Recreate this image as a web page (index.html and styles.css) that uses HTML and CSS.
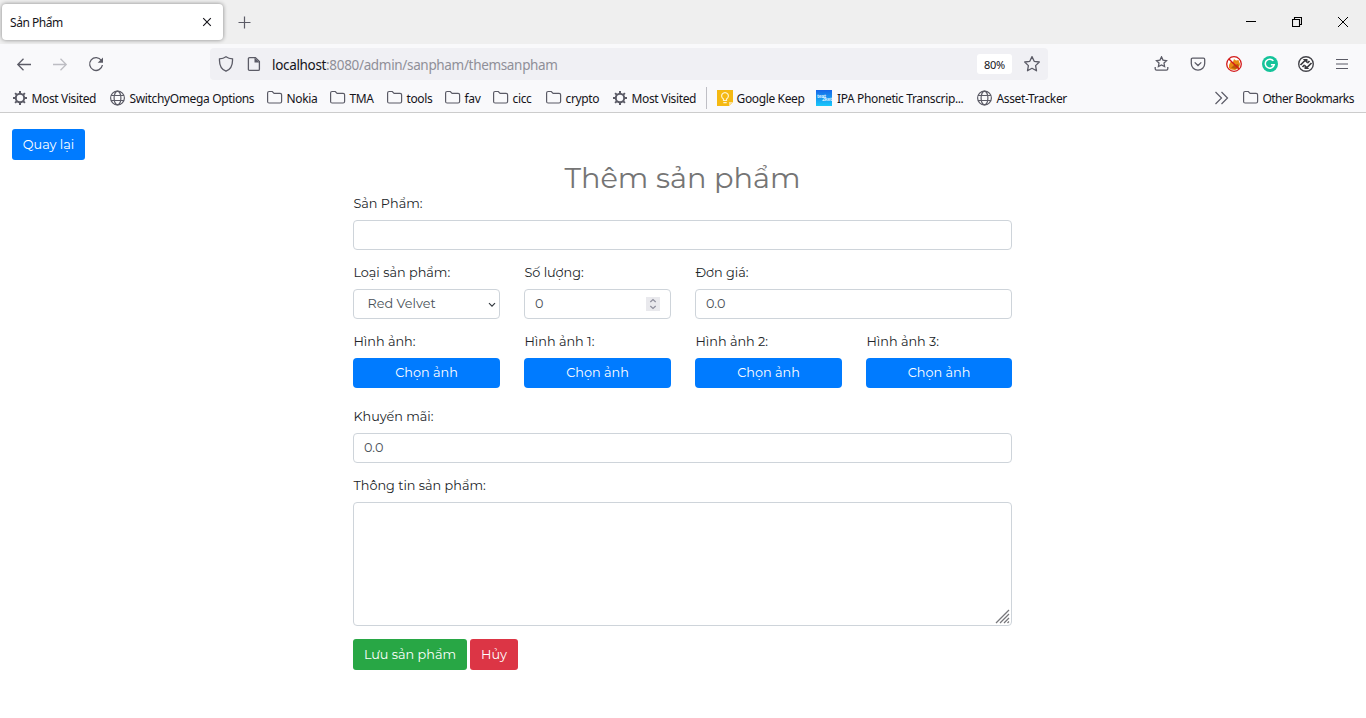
FILE: index.html
```html
<!DOCTYPE html>
<html lang="vi">
<head>
<meta charset="utf-8">
<title>Sản Phẩm</title>
<link rel="stylesheet" href="styles.css">
</head>
<body>
<svg width="0" height="0" class="defs">
  <symbol id="gear" viewBox="0 0 16 16"><circle cx="8" cy="8" r="4.200" fill="none" stroke="currentColor" stroke-width="2"/><path d="M8 1v3M8 12v3M1 8h3M12 8h3M3.1 3.1l2 2M10.9 10.9l2 2M3.1 12.9l2-2M10.9 5.1l2-2" stroke="currentColor" stroke-width="2"/></symbol>
  <symbol id="globe" viewBox="0 0 16 16"><g fill="none" stroke="currentColor" stroke-width="1.2"><circle cx="7.500" cy="8" r="6.9"/><ellipse cx="7.500" cy="8" rx="3.4" ry="6.9"/><path d="M1 5.500h13M1 10.500h13"/></g></symbol>
  <symbol id="folder" viewBox="0 0 16 16"><path d="M.6 3q0-1.500 1.500-1.500h3.200l1.800 1.800h6q1.500 0 1.500 1.500v6.700q0 1.500-1.500 1.500h-11q-1.500 0-1.500-1.500z" fill="none" stroke="currentColor" stroke-width="1.200"/></symbol>
</svg>

<header class="browser">
  <div class="titlebar">
    <div class="tab"><span class="tab-title">Sản Phẩm</span>
      <svg class="tab-close" width="10" height="10" viewBox="0 0 10 10"><path d="M1.200 1.200l7.600 7.600M8.800 1.200l-7.600 7.600" stroke="#15141a" stroke-width="1.100"/></svg>
    </div>
    <svg class="new-tab" width="13" height="13" viewBox="0 0 13 13"><path d="M6.500 .5v12M.5 6.500h12" stroke="#5b5b66" stroke-width="1.200"/></svg>
    <div class="window-buttons">
      <svg width="10" height="10" viewBox="0 0 10 10"><path d="M0 4.500h10" stroke="#000"/></svg>
      <svg width="10" height="10" viewBox="0 0 10 10"><path d="M.5 2.500h7v7h-7zM2.500 2.500v-2h7v7h-2" fill="none" stroke="#000" stroke-width="1.100"/></svg>
      <svg width="10" height="10" viewBox="0 0 10 10"><path d="M0 0l10 10M10 0L0 10" stroke="#000"/></svg>
    </div>
  </div>

  <div class="navbar">
    <div class="nav-buttons">
      <svg width="16" height="16" viewBox="0 0 16 16"><path d="M15 8.500H2M7.500 2.800L1.800 8.500l5.700 5.700" fill="none" stroke="#5b5b66" stroke-width="1.300"/></svg>
      <svg width="16" height="16" viewBox="0 0 16 16"><path d="M1 8.500h13M8.500 2.800l5.700 5.700-5.700 5.700" fill="none" stroke="#bdbdc3" stroke-width="1.300"/></svg>
      <svg width="16" height="16" viewBox="0 0 16 16"><path d="M13.400 4.500A6.400 6.400 0 1 0 14.400 9" fill="none" stroke="#5b5b66" stroke-width="1.300"/><path d="M15 1.500v5.300H9.700z" fill="#5b5b66"/></svg>
    </div>
    <div class="urlbar">
      <svg width="16" height="16" viewBox="0 0 16 16"><path d="M8 .7c2 1.400 4.200 2 6.500 2.200.3 5.500-1 10.100-6.500 12.300C2.500 13 1.200 8.400 1.500 2.900 3.800 2.700 6 2.100 8 .7z" fill="none" stroke="#5b5b66" stroke-width="1.300"/></svg>
      <svg class="page-icon" width="16" height="16" viewBox="0 0 16 16"><path d="M3.600 1.600h5.800l4 4v7.600q0 1.200-1.200 1.200H3.600q-1.200 0-1.200-1.200V2.800q0-1.200 1.200-1.200z" fill="none" stroke="#5b5b66" stroke-width="1.300"/><path d="M8.500 1.500v5h5z" fill="#5b5b66"/></svg>
      <span class="url"><b>localhost</b>:8080/admin/sanpham/themsanpham</span>
      <span class="zoom">80%</span>
      <svg width="18" height="18" viewBox="0 0 18 18"><path d="M9 1.600l2.200 4.700 5.100.7-3.700 3.600.9 5.200L9 13.300l-4.500 2.500.9-5.200L1.700 7l5.100-.7z" fill="none" stroke="#5b5b66" stroke-width="1.300" stroke-linejoin="round"/></svg>
    </div>
    <div class="tools">
      <svg width="16" height="16" viewBox="0 0 16 16"><path d="M7.500 .9l1.500 3.200 3.500.5L10 7l.6 3.500-3.100-1.600-3.100 1.600L5 7 2.500 4.600l3.500-.5zM1.200 11v1.700q0 1.400 1.400 1.400h9.800q1.400 0 1.400-1.400V11" fill="none" stroke="#5b5b66" stroke-width="1.300"/></svg>
      <svg width="16" height="16" viewBox="0 0 16 16"><path d="M2.500 2.200h11q1.200 0 1.200 1.200v4.100a6.700 6.700 0 0 1-13.400 0V3.400q0-1.200 1.200-1.200zM4.700 6.400L8 9.500l3.300-3.100" fill="none" stroke="#5b5b66" stroke-width="1.300"/></svg>
      <svg width="16" height="16" viewBox="0 0 16 16"><circle cx="8" cy="8" r="7.300" fill="#fff"/><path d="M3 9l1.500-3L7 6l1-3 2 1.500L12.500 4l1.500 4-1 4-4 2-4-.5L3 12z" fill="#e88a12"/><path d="M5 12l3-3 4-1 1 2-3 3z" fill="#b85c08"/><circle cx="8" cy="8" r="7.300" fill="none" stroke="#d31919" stroke-width="1.300"/><path d="M2.900 2.900l10.200 10.200" stroke="#d31919" stroke-width="1.400"/></svg>
      <svg width="16" height="16" viewBox="0 0 16 16"><circle cx="8" cy="8" r="8" fill="#15c39a"/><path d="M11.400 4.900A4.500 4.500 0 1 0 12.200 8.700H8.900" fill="none" stroke="#fff" stroke-width="1.500"/></svg>
      <svg width="16" height="16" viewBox="0 0 16 16"><circle cx="8" cy="8" r="7.300" fill="#fff" stroke="#45454b" stroke-width="1.400"/><path d="M2.500 9L7 4.500M4.500 11l2-2M9 11.500l4.500-4.500M9.500 7l2-2" stroke="#38383d" stroke-width="1.700"/><path d="M4.800 3h4.700v4.700zM6.500 13h4.700L6.500 8.300z" fill="#38383d"/></svg>
      <svg width="16" height="16" viewBox="0 0 16 16"><path d="M2 3.500h12M2 8h12M2 12.500h12" stroke="#5b5b66" stroke-width="1.200"/></svg>
    </div>
  </div>

  <nav class="bookmarks">
    <a><svg><use href="#gear"/></svg><span>Most Visited</span></a>
    <a><svg><use href="#globe"/></svg><span>SwitchyOmega Options</span></a>
    <a><svg><use href="#folder"/></svg><span>Nokia</span></a>
    <a><svg><use href="#folder"/></svg><span>TMA</span></a>
    <a><svg><use href="#folder"/></svg><span>tools</span></a>
    <a><svg><use href="#folder"/></svg><span>fav</span></a>
    <a><svg><use href="#folder"/></svg><span>cicc</span></a>
    <a><svg><use href="#folder"/></svg><span>crypto</span></a>
    <a><svg><use href="#gear"/></svg><span>Most Visited</span></a>
    <i class="divider"></i>
    <a><svg viewBox="0 0 16 16"><path d="M0 0h16v12l-4 4H0z" fill="#f5b912"/><path d="M16 12l-4 4v-4z" fill="#fbe19c"/><path d="M6.500 10.500V9a3.400 3.400 0 1 1 3 0v1.500zM6.300 12.600h3.400" fill="none" stroke="#fff3cf" stroke-width="1.200"/></svg><span>Google Keep</span></a>
    <a class="ipa"><svg viewBox="0 0 16 16"><defs><linearGradient id="sky" x2="0" y2="1"><stop stop-color="#1766e8"/><stop offset="1" stop-color="#18c8fa"/></linearGradient></defs><path d="M0 0h16v16H0z" fill="url(#sky)"/><text x="1" y="7.500" class="logo-text">text</text><text x="6" y="11" class="logo-text">2ket</text></svg><span>IPA Phonetic Transcrip...</span></a>
    <a><svg><use href="#globe"/></svg><span>Asset-Tracker</span></a>
    <svg class="more" viewBox="0 0 16 16"><path d="M1.500 2l6 6-6 6M7.500 2l6 6-6 6" fill="none" stroke="#5b5b66" stroke-width="1.200"/></svg>
    <a class="other"><svg><use href="#folder"/></svg><span>Other Bookmarks</span></a>
  </nav>
</header>

<main class="page">
  <button class="btn primary back">Quay lại</button>
  <form class="product-form">
    <h2>Thêm sản phẩm</h2>
    <div class="field"><label>Sản Phẩm:</label><input class="control" type="text"></div>
    <div class="row">
      <div class="field"><label>Loại sản phẩm:</label>
        <div class="control select">Red Velvet<svg width="8" height="6" viewBox="0 0 8 6"><path d="M1 1.200l3 3 3-3" fill="none" stroke="#33393f" stroke-width="1.200"/></svg></div></div>
      <div class="field"><label>Số lượng:</label>
        <div class="control number">0<svg width="14" height="14" viewBox="0 0 14 14"><path d="M0 0h14v14H0z" fill="#e9e9ed"/><path d="M4.300 5L7 2.600 9.700 5M4.300 9L7 11.400 9.700 9" fill="none" stroke="#8f8f9d" stroke-width="1.300"/></svg></div></div>
      <div class="field wide"><label>Đơn giá:</label><input class="control" type="text" value="0.0"></div>
    </div>
    <div class="row images">
      <div class="field"><label>Hình ảnh:</label><button class="btn primary pick" type="button">Chọn ảnh</button></div>
      <div class="field"><label>Hình ảnh 1:</label><button class="btn primary pick" type="button">Chọn ảnh</button></div>
      <div class="field"><label>Hình ảnh 2:</label><button class="btn primary pick" type="button">Chọn ảnh</button></div>
      <div class="field"><label>Hình ảnh 3:</label><button class="btn primary pick" type="button">Chọn ảnh</button></div>
    </div>
    <div class="field"><label>Khuyến mãi:</label><input class="control" type="text" value="0.0"></div>
    <div class="field"><label>Thông tin sản phẩm:</label>
      <div class="control area"><svg width="15" height="15" viewBox="0 0 15 15"><path d="M1 14L14 1M5 14l9-9M9 14l5-5M12.500 14l1.500-1.500" stroke="#77777b" stroke-width="1.300"/></svg></div></div>
    <div class="actions"><button class="btn success" type="button">Lưu sản phẩm</button><button class="btn danger" type="button">Hủy</button></div>
  </form>
</main>
</body>
</html>
```
FILE: styles.css
```css
* { box-sizing: border-box; }
body { margin: 0; background: #fff; overflow: hidden; font-family: Montserrat, Inter, sans-serif; font-size: 12.8px; color: #212529; }
svg { flex: none; display: block; }
.defs { position: absolute; }

.browser { height: 113px; background: #f9f9fb; border-bottom: 1px solid #ccc; font: 12px "Segoe UI", "Noto Sans", sans-serif; color: #15141a; }
.titlebar { height: 44px; background: #efefef; display: flex; align-items: center; }
.tab { width: 221px; height: 36px; margin-left: 2px; padding: 0 11px 0 8px; background: #fff; border-radius: 4px; box-shadow: 0 0 4px rgba(0,0,0,.45); display: flex; align-items: center; justify-content: space-between; }
.tab-title { padding-top: 1px; letter-spacing: -.45px; }
.new-tab { margin-left: 15px; }
.window-buttons { margin-left: auto; padding-right: 18px; display: flex; gap: 36px; }

.navbar { height: 40px; display: flex; align-items: center; }
.nav-buttons { width: 210px; padding-left: 16px; display: flex; gap: 20px; }
.urlbar { width: 838px; height: 32px; padding: 0 7px 0 8px; background: #f0f0f4; border-radius: 4px; display: flex; align-items: center; }
.page-icon { margin-left: 12px; }
.url { margin-left: 10px; padding-top: 2px; flex: 1; font-size: 13.500px; letter-spacing: -.33px; color: #8f8f98; }
.url b { font-weight: 400; color: #15141a; }
.zoom { width: 35px; height: 20px; margin-right: 11px; border-radius: 3px; background: #fff; font-size: 11px; line-height: 21px; text-align: center; letter-spacing: -.2px; }
.tools { margin-left: auto; padding-right: 16px; display: flex; gap: 20px; }

.bookmarks { height: 28px; padding-left: 12px; display: grid; align-items: center; grid-template-columns: 98px 157px 63px 57px 58px 48px 53px 66px 94px 11px 99px 161px 237px 29px 1fr; letter-spacing: -.36px; }
.bookmarks a { display: flex; align-items: center; gap: 3.500px; white-space: nowrap; }
.bookmarks svg { width: 16px; height: 16px; color: #5b5b66; }
.bookmarks .ipa { gap: 5px; }
.bookmarks .other { letter-spacing: -.56px; }
.logo-text { font: bold 5px "Noto Sans", sans-serif; letter-spacing: -.3px; fill: #d8edff; }
.divider { width: 1px; height: 22px; background: #bfbfc5; }

.page { padding-top: 16px; }
.btn { height: 31px; padding: 0 0 1px; border: 0; border-radius: 3px; color: #fff; font: inherit; }
.primary { background: #007bff; }
.success { width: 114px; background: #28a745; }
.danger { width: 48px; background: #dc3545; }
.back { display: block; width: 73px; margin-left: 12px; }
.product-form { width: 659px; margin-left: 353px; }
h2 { height: 34px; margin: 0; font-size: 28.8px; font-weight: 400; line-height: 36px; text-align: center; color: #757575; }
.field { margin-bottom: 13px; }
label { display: block; height: 26px; padding-left: .4px; line-height: 19px; }
.control { display: block; width: 100%; height: 30px; padding: 0 10px 2px; border: 1px solid #ced4da; border-radius: 4px; background: #fff; font: inherit; color: #495057; }
.row { display: grid; grid-template-columns: 147px 147px 147px 146px; column-gap: 24px; }
.wide { grid-column: span 2; }
.select, .number { display: flex; align-items: center; justify-content: space-between; }
.select { padding-left: 13.500px; padding-right: 3px; }
.select svg { margin-top: 3px; }
.number svg { margin-top: 1px; }
.images { margin-bottom: 6px; }
.pick { display: block; width: 100%; height: 30px; padding-bottom: 2px; border-radius: 4px; }
.area { height: 124px; padding: 0 1px 1px 0; display: flex; align-items: flex-end; justify-content: flex-end; }
.actions { display: flex; gap: 3px; }
```
